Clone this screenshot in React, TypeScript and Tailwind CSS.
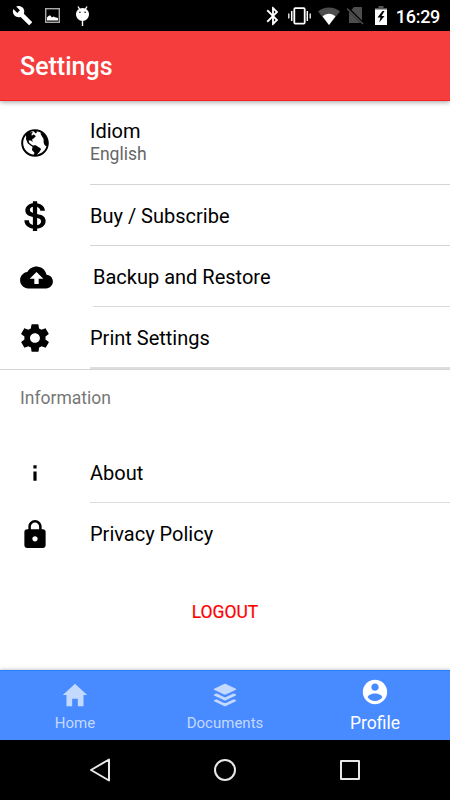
import type { ReactNode } from 'react';
import type { IconType } from 'react-icons';
import {
  IoLogoBuffer,
  IoLogoUsd,
  IoMdCloudUpload,
  IoMdContact,
  IoMdGlobe,
  IoMdHome,
  IoMdInformation,
  IoMdLock,
  IoMdSettings
} from 'react-icons/io';
import { MdBluetooth, MdBuild } from 'react-icons/md';

function StatusBar() {
  return (
    <div className="flex h-[31px] shrink-0 items-center bg-black text-white">
      <MdBuild className="ml-3 size-[21px]" />
      <svg className="ml-3 h-[15px] w-[15px]" viewBox="0 0 15 15">
        <rect x="0.7" y="0.7" width="13.6" height="13.6" fill="none" stroke="#aaa" strokeWidth="1.4" />
        <path d="M2 12.5V9.5L3.5 8l1.5-.8L7 9.5l1.5-1 1.5.8 3 .7v2.5z" fill="#fff" />
      </svg>
      <svg className="ml-4 h-5 w-[13px]" viewBox="0 0 13 20">
        <path d="M2 0.5l1.8 3M11 0.5L9.2 3.5M6.5 14v6" stroke="#fff" strokeWidth="1.4" />
        <path d="M0 8a6.5 6 0 0 1 13 0c0 4-3 7-6.5 7S0 12 0 8z" fill="#fff" />
        <circle cx="3.9" cy="6.3" r="0.8" />
        <circle cx="9.1" cy="6.3" r="0.8" />
      </svg>
      <MdBluetooth className="ml-auto size-[22px]" />
      <svg className="ml-1 h-[18px] w-[23px]" viewBox="0 0 23 18" fill="none" stroke="#fff">
        <rect x="6.3" y="1.2" width="10.4" height="15.4" rx="1" strokeWidth="1.8" />
        <path d="M3.7 4v10M19.3 4v10" strokeWidth="1.5" />
        <path d="M.8 6.5v5M22.2 6.5v5" strokeWidth="1.3" />
      </svg>
      <svg className="ml-[7px] h-[18px] w-[22px]" viewBox="0 0 22 18">
        <path d="M0 4.5C6-1 16-1 22 4.5L11 18z" fill="#4d4d4d" />
        <path d="M4.6 9.5C8 5.8 14 5.8 17.4 9.5L11 18z" fill="#fff" />
      </svg>
      <svg className="ml-[7px] h-[19px] w-[17px]" viewBox="0 0 17 19">
        <path d="M2 6.5L7 1h8v16H2z" fill="#4d4d4d" />
        <path d="M0 1.5L16.5 18" stroke="#000" strokeWidth="3" />
        <path d="M0 2.5L16 18" stroke="#555" strokeWidth="1.3" />
      </svg>
      <svg className="ml-[11px] h-[19px] w-3" viewBox="0 0 12 19">
        <path d="M3.5 0h5v2H12v3H0V2h3.5z" fill="#555" />
        <path d="M0 3.5h12V19H0z" fill="#fff" />
        <path d="M7.5 5L2.5 11.5h3L4.2 16.5l5.3-6.5h-3L9.5 5z" fill="#000" />
      </svg>
      <span className="mr-[10px] ml-[9px] pt-[2px] text-[18px] leading-none font-medium tracking-[-0.3px]">16:29</span>
    </div>
  );
}

interface ISettingRowProps {
  icon: IconType;
  iconClass: string;
  children: ReactNode;
  note?: string;
  className: string;
  lineClass?: string;
}

function SettingRow({ icon: Icon, iconClass, children, note, className, lineClass = '' }: ISettingRowProps) {
  return (
    <div className={`flex pl-[18px] ${className}`}>
      <div className="flex w-[72px] shrink-0 items-center">
        <Icon className={iconClass} />
      </div>
      <div className={`flex flex-1 flex-col justify-center ${lineClass}`}>
        <span className="text-[20px] leading-[24px]">{children}</span>
        {note && <span className="text-[17.5px] leading-[22px] text-[#666]">{note}</span>}
      </div>
    </div>
  );
}

function Tab({ icon: Icon, label, active = false }: { icon: IconType; label: string; active?: boolean }) {
  return (
    <div
      className={
        active
          ? 'flex flex-1 flex-col items-center pt-[6px] text-white'
          : 'flex flex-1 flex-col items-center pt-[9px] text-[#c4d9ff]'
      }
    >
      <Icon className="size-[30px]" />
      <span className={active ? 'mt-[6px] text-[17.5px] leading-5' : 'mt-[3px] text-[15px] leading-5'}>{label}</span>
    </div>
  );
}

export default function App() {
  return (
    <div className="flex h-[800px] w-[450px] flex-col overflow-hidden bg-white font-['Roboto',sans-serif] text-black">
      <StatusBar />

      <header className="z-10 flex h-[70px] shrink-0 items-center border-b border-[#f92020] bg-[#f53d3d] pt-[2px] pl-5 shadow-[0_1px_5px_rgba(0,0,0,0.4)]">
        <h1 className="text-[25px] font-medium text-white">Settings</h1>
      </header>

      <main className="flex flex-1 flex-col">
        <SettingRow
          icon={IoMdGlobe}
          iconClass="size-[34px]"
          note="English"
          className="h-[84px]"
          lineClass="border-b border-[#d4d4d4] pb-[2px]"
        >
          Idiom
        </SettingRow>
        <SettingRow
          icon={IoLogoUsd}
          iconClass="size-[34px]"
          className="h-[61px]"
          lineClass="border-b border-[#d4d4d4] pt-[1px]"
        >
          Buy / Subscribe
        </SettingRow>
        <SettingRow
          icon={IoMdCloudUpload}
          iconClass="mt-[2px] ml-[1px] size-[35px]"
          className="h-[61px]"
          lineClass="ml-[3px] border-b border-[#d8d8d8] pt-[2px]"
        >
          Backup and Restore
        </SettingRow>
        <SettingRow
          icon={IoMdSettings}
          iconClass="size-[34px]"
          className="h-[62px]"
          lineClass="border-b-2 border-[#dedede] pt-[2px]"
        >
          Print Settings
        </SettingRow>

        <div className="h-[73px] border-t border-[#d4d4d4] pt-4 pl-5 text-[17.5px] leading-6 text-[#777]">
          Information
        </div>

        <SettingRow
          icon={IoMdInformation}
          iconClass="size-[34px]"
          className="h-[61px]"
          lineClass="border-b border-[#dcdcdc] pt-[2px]"
        >
          About
        </SettingRow>
        <SettingRow icon={IoMdLock} iconClass="size-[34px]" className="h-[61px]">
          Privacy Policy
        </SettingRow>

        <button className="mt-[36px] text-[17.5px] leading-6 text-[#f00] [-webkit-text-stroke:0.2px]">LOGOUT</button>
      </main>

      <nav className="z-10 flex h-[70px] shrink-0 border-t border-[#2482ff] bg-[#488aff] shadow-[0_-1px_3px_rgba(0,0,0,0.2)]">
        <Tab icon={IoMdHome} label="Home" />
        <Tab icon={IoLogoBuffer} label="Documents" />
        <Tab icon={IoMdContact} label="Profile" active />
      </nav>

      <div className="flex h-[60px] shrink-0 items-center bg-black pl-[89px]">
        <svg className="h-6 w-[22px]" viewBox="0 0 22 24">
          <path d="M20 1.5v21L2 12z" fill="none" stroke="#e8e8e8" strokeWidth="2" strokeLinejoin="round" />
        </svg>
        <div className="ml-[103px] size-[22px] rounded-full border-2 border-[#e8e8e8]" />
        <div className="ml-[104px] size-5 rounded-[1px] border-2 border-[#e8e8e8]" />
      </div>
    </div>
  );
}
